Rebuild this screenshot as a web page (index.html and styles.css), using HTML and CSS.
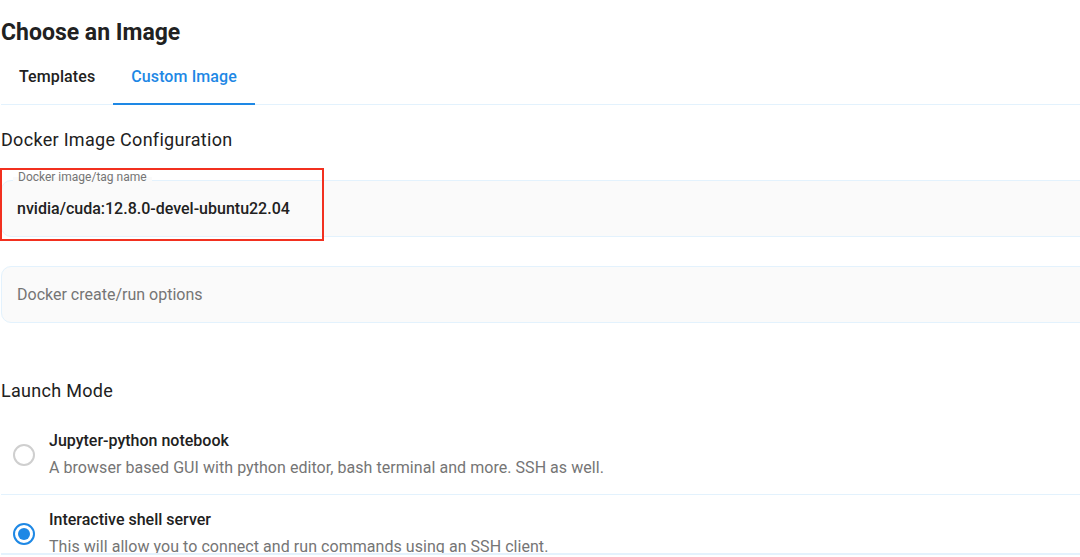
FILE: index.html
```html
<!DOCTYPE html>
<html lang="en">
<head>
    <meta charset="UTF-8">
    <meta name="viewport" content="width=device-width, initial-scale=1.0">
    <title>Choose an Image</title>
    <link rel="stylesheet" href="styles.css">
</head>
<body>
    <div class="page">
        <h1 class="title">Choose an Image</h1>

        <div class="tabs">
            <div class="tab">Templates</div>
            <div class="tab active">Custom Image</div>
        </div>

        <h2 class="section-title">Docker Image Configuration</h2>

        <div class="field">
            <span class="field-label">Docker image/tag name</span>
            <span class="field-value">nvidia/cuda:12.8.0-devel-ubuntu22.04</span>
            <div class="highlight"></div>
        </div>

        <div class="field second">
            <span class="field-placeholder">Docker create/run options</span>
        </div>

        <h2 class="section-title launch">Launch Mode</h2>

        <div class="mode-list">
            <div class="mode">
                <span class="radio"></span>
                <div class="mode-text">
                    <div class="mode-name">Jupyter-python notebook</div>
                    <div class="mode-desc">A browser based GUI with python editor, bash terminal and more. SSH as well.</div>
                </div>
            </div>
            <div class="mode">
                <span class="radio checked"></span>
                <div class="mode-text">
                    <div class="mode-name">Interactive shell server</div>
                    <div class="mode-desc">This will allow you to connect and run commands using an SSH client.</div>
                </div>
            </div>
        </div>
    </div>
</body>
</html>
```

FILE: styles.css
```css
body {
    margin: 0;
    font-family: Roboto, "Liberation Sans", Arial, sans-serif;
    color: #212121;
    background: #fff;
    overflow: hidden;
}
.page {
    width: 1100px;
    padding-left: 1px;
}
.title {
    font-size: 23px;
    font-weight: 700;
    line-height: 32px;
    margin: 17px 0 0;
}
.tabs {
    display: flex;
    border-bottom: 1px solid #e3f2fd;
}
.tab {
    display: flex;
    align-items: center;
    height: 56px;
    box-sizing: border-box;
    padding: 0 18px;
    font-size: 16px;
    font-weight: 500;
    letter-spacing: 0.1px;
    border-bottom: 2px solid transparent;
    margin-bottom: -1px;
}
.tab.active {
    color: #1e88e5;
    border-bottom-color: #1e88e5;
}
.section-title {
    font-size: 18px;
    font-weight: 400;
    letter-spacing: 0.3px;
    line-height: 24px;
    margin: 23px 0 0;
}
.section-title.launch {
    margin-top: 56px;
}
.field {
    position: relative;
    display: flex;
    align-items: center;
    height: 57px;
    box-sizing: border-box;
    margin-top: 28px;
    padding-left: 15px;
    background: #fafafa;
    border: 1px solid #e3f2fd;
    border-radius: 10px;
}
.field.second {
    margin-top: 29px;
}
.field-label {
    position: absolute;
    top: -11px;
    left: 11px;
    padding: 0 5px;
    font-size: 12px;
    line-height: 14px;
    color: #757575;
    background: linear-gradient(#fff 50%, #fafafa 50%);
}
.field-value {
    font-size: 16px;
    font-weight: 500;
}
.field-placeholder {
    font-size: 16px;
    color: #757575;
}
.highlight {
    position: absolute;
    left: -2px;
    top: -13px;
    width: 324px;
    height: 73px;
    box-sizing: border-box;
    border: 2px solid #f2301f;
}
.mode-list {
    margin-top: 13px;
    height: 137px;
    overflow: hidden;
    border-bottom: 2px solid #e3f2fd;
}
.mode {
    display: flex;
    align-items: center;
    gap: 14px;
    padding: 13px 0 14px 12px;
    border-bottom: 1px solid #e3f2fd;
}
.radio {
    position: relative;
    flex: none;
    width: 22px;
    height: 22px;
    box-sizing: border-box;
    border: 2px solid #cfcfcf;
    border-radius: 50%;
}
.radio.checked {
    border-color: #1e88e5;
}
.radio.checked::after {
    content: "";
    position: absolute;
    left: 3px;
    top: 3px;
    width: 12px;
    height: 12px;
    border-radius: 50%;
    background: #1e88e5;
}
.mode-text {
    display: flex;
    flex-direction: column;
    gap: 3px;
}
.mode-name {
    font-size: 16px;
    font-weight: 500;
    line-height: 24px;
}
.mode-desc {
    font-size: 16px;
    line-height: 24px;
    color: #757575;
    letter-spacing: 0.05px;
}
```
